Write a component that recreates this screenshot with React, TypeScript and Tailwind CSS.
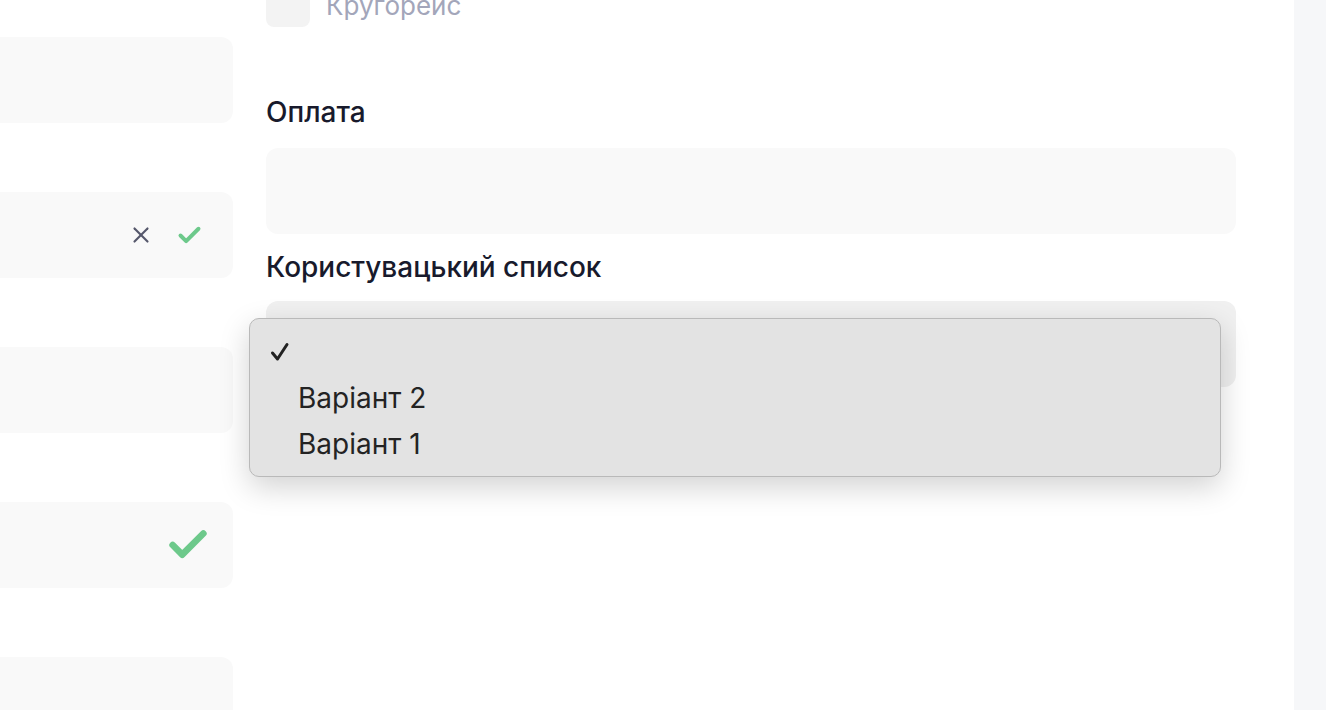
import { Check, X } from "lucide-react";

function LeftBox({ children }: { children?: React.ReactNode }) {
  return (
    <div className="flex h-[86px] w-[233px] shrink-0 items-center justify-end gap-[22px] rounded-r-xl bg-[#f9f9f9] pr-[30px]">
      {children}
    </div>
  );
}

export default function App() {
  return (
    <div className="flex h-[710px] w-[1326px] overflow-hidden bg-white font-['Inter',sans-serif]">
      <div className="flex w-[233px] shrink-0 flex-col gap-[69px] pt-[37px]">
        <LeftBox />
        <LeftBox>
          <X className="h-[26px] w-[26px] text-[#55576b]" strokeWidth={2} />
          <Check className="h-[27px] w-[27px] text-[#6dc98b]" strokeWidth={3.5} />
        </LeftBox>
        <LeftBox />
        <LeftBox>
          <Check className="mr-[-8px] h-[46px] w-[46px] text-[#6dc98b]" strokeWidth={3.5} />
        </LeftBox>
        <LeftBox />
      </div>

      <div className="ml-[33px] flex w-[970px] shrink-0 flex-col">
        <div className="-mt-[17px] flex items-center gap-4">
          <div className="h-[44px] w-[44px] rounded-lg bg-[#f3f3f3]" />
          <span className="text-[26px] text-[#a3a6ba]">Кругорейс</span>
        </div>

        <label className="mt-[68px] text-[28px] font-medium leading-[34px] text-[#181a2c]">Оплата</label>
        <div className="mt-[19px] h-[86px] rounded-xl bg-[#f9f9f9]" />

        <label className="mt-[16px] text-[28px] font-medium leading-[34px] text-[#181a2c]">
          Користувацький список
        </label>
        <div className="relative mt-[17px] h-[86px] rounded-xl bg-[#f0f0f0]">
          <div className="absolute left-[-17px] top-[17px] w-[972px] rounded-[10px] border border-[#b9b9b9] bg-[#e3e3e3] pb-[9px] pt-[10px] shadow-[0_10px_30px_rgba(0,0,0,0.18)]">
            <div className="flex h-[46px] items-center pl-[19px]">
              <svg width="22" height="22" viewBox="0 0 22 22" fill="none">
                <polyline
                  points="3.5,12 8.5,18 18,3.5"
                  stroke="#222"
                  strokeWidth="3"
                  strokeLinecap="round"
                  strokeLinejoin="round"
                />
              </svg>
            </div>
            <div className="flex h-[46px] items-center pl-[48px] text-[28px] text-[#232323]">Варіант 2</div>
            <div className="flex h-[46px] items-center pl-[48px] text-[28px] text-[#232323]">Варіант 1</div>
          </div>
        </div>
      </div>

      <div className="ml-auto h-full w-[32px] bg-[#f6f7f9]" />
    </div>
  );
}
